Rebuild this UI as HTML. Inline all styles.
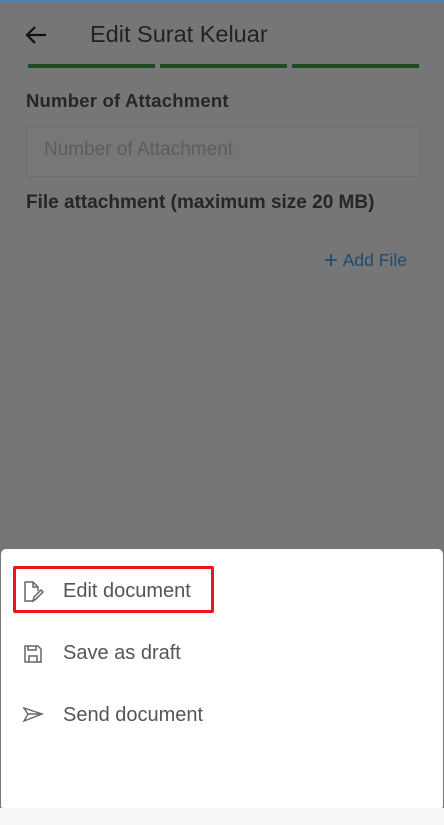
<!DOCTYPE html>
<html><head><meta charset="utf-8"><style>
*{margin:0;padding:0;box-sizing:border-box}
body{width:444px;height:825px;overflow:hidden;background:#767676;font-family:"Liberation Sans",sans-serif;position:relative}
.top{position:absolute;left:0;top:0;width:444px;height:2px;background:#3b8bc0}
.t{position:absolute;white-space:nowrap}
.bar{position:absolute;top:64px;height:4px;background:#1c4a22}
.sheet{position:absolute;left:1px;top:549px;width:442px;height:259px;background:#fff;border-radius:5px 5px 2px 2px}
.foot{position:absolute;left:0;top:808px;width:444px;height:17px;background:#f7f7f7}
.it{position:absolute;left:63px;font-size:20px;color:#555}
svg{position:absolute}
</style></head><body>
<div class="top"></div>
<svg style="left:24px;top:24px" width="24" height="22" viewBox="0 0 24 22"><path d="M22 11H3M11 3L3 11L11 19" fill="none" stroke="#111" stroke-width="2.2"/></svg>
<div class="t" style="left:90px;top:21px;font-size:23.5px;color:#222">Edit Surat Keluar</div>
<div class="bar" style="left:28px;width:127px"></div>
<div class="bar" style="left:160px;width:127px"></div>
<div class="bar" style="left:292px;width:127px"></div>
<div class="t" style="left:26px;top:90px;font-size:18.5px;font-weight:bold;color:#262626;letter-spacing:0.2px">Number of Attachment</div>
<div style="position:absolute;left:26px;top:126px;width:395px;height:51px;border:1px solid #6e6e6e;background:#777"></div>
<div class="t" style="left:44px;top:139px;font-size:19px;color:#5c5c5c">Number of Attachment</div>
<div class="t" style="left:26px;top:192px;font-size:19px;font-weight:bold;color:#262626">File attachment (maximum size 20 MB)</div>
<div class="t" style="left:324px;top:245px;font-size:17px;color:#1d4a74"><span style="font-size:24px;position:relative;top:2px">+</span> <span style="font-size:17.5px">Add File</span></div>
<div class="sheet"></div>
<div style="position:absolute;left:13px;top:566px;width:201px;height:47px;border:3px solid #f0141c;border-radius:2px"></div>
<svg style="left:23px;top:580px" width="22" height="24" viewBox="0 0 22 24"><path d="M10 21H2V2H10L15 7V11M10 2V7H15" fill="none" stroke="#666" stroke-width="1.5"/><path d="M10 21L11 17L18 10L20 12L13 19Z" fill="none" stroke="#666" stroke-width="1.5"/></svg>
<div class="it" style="top:580px">Edit document</div>
<svg style="left:23px;top:644px" width="20" height="20" viewBox="0 0 20 20"><path d="M2 2H15L18 5V18H2Z M6 18V12H14V18 M5 2V6H13V2" fill="none" stroke="#666" stroke-width="1.5"/></svg>
<div class="it" style="top:642px">Save as draft</div>
<svg style="left:22px;top:706px" width="22" height="18" viewBox="0 0 22 18"><path d="M2 2L20 8L2 15L6 8Z M6 8H20" fill="none" stroke="#666" stroke-width="1.4"/></svg>
<div class="it" style="top:704px">Send document</div>
<div class="foot"></div>
</body></html>
